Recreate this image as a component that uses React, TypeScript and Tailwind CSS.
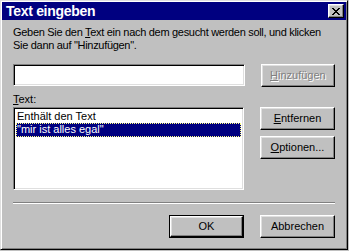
import React from 'react';

const raised =
  'border border-t-white border-l-white border-r-black border-b-black shadow-[inset_-1px_-1px_#808080,inset_1px_1px_#dfdfdf]';
const sunken =
  'border border-t-[#808080] border-l-[#808080] border-r-white border-b-white shadow-[inset_1px_1px_#000,inset_-1px_-1px_#dfdfdf]';

function Btn({ children, disabled, isDefault }: { children: React.ReactNode; disabled?: boolean; isDefault?: boolean }) {
  const inner = (
    <div
      className={`${raised} flex h-full w-full items-center justify-center bg-[#c0c0c0] ${
        disabled ? 'text-[#808080] [text-shadow:1px_1px_#fff]' : 'text-black'
      }`}
    >
      {children}
    </div>
  );
  if (isDefault) {
    return <div className="h-[23px] w-[75px] border border-black">{inner}</div>;
  }
  return <div className="h-[23px] w-[75px]">{inner}</div>;
}

export default function App() {
  return (
    <div className="h-[251px] w-[349px] bg-[#c0c0c0] font-['Liberation_Sans',Arial,sans-serif] text-[11px] leading-[13px] text-black">
      <div className="flex h-[250px] w-[348px] flex-col border border-t-[#dfdfdf] border-l-[#dfdfdf] border-r-black border-b-black shadow-[inset_1px_1px_#fff,inset_-1px_-1px_#808080] p-[1px]">
        {/* title bar */}
        <div className="flex h-[18px] items-center justify-between bg-[#000080] pl-[4px] pr-[2px]">
          <span className="text-[14px] font-bold tracking-[-0.3px] text-white">Text eingeben</span>
          <div className={`${raised} flex h-[14px] w-[16px] items-center justify-center bg-[#c0c0c0]`}>
            <svg width="8" height="7" viewBox="0 0 8 7" shapeRendering="crispEdges">
              <path d="M0 0h2v1H0zM6 0h2v1H6zM1 1h2v1H1zM5 1h2v1H5zM2 2h4v1H2zM3 3h2v1H3zM2 4h4v1H2zM1 5h2v1H1zM5 5h2v1H5zM0 6h2v1H0zM6 6h2v1H6z" fill="#000" />
            </svg>
          </div>
        </div>

        <div className="flex flex-col px-[11px] pt-[6px]">
          <p className="whitespace-nowrap tracking-[-0.3px]">
            Geben Sie den <span className="underline">T</span>ext ein nach dem gesucht werden soll, und klicken
            <br />
            Sie dann auf "Hinzufügen".
          </p>

          <div className="mt-[12px] flex gap-[16px]">
            <div className={`${sunken} h-[22px] w-[234px] bg-white`} />
            <Btn disabled>
              <span className="underline">H</span>inzufügen
            </Btn>
          </div>

          <div className="mt-[6px] h-[13px]">
            <span className="underline">T</span>ext:
          </div>

          <div className="mt-[1px] flex gap-[16px]">
            <div className={`${sunken} h-[83px] w-[234px] bg-white p-[2px]`}>
              <div className="h-[13px] px-[1px]">Enthält den Text</div>
              <div className="h-[14px] bg-[#000080] px-[1px] text-white outline-1 -outline-offset-1 outline-dotted outline-[#ffff80]">
                "mir ist alles egal"
              </div>
            </div>
            <div className="flex flex-col gap-[6px]">
              <Btn>
                <span className="underline">E</span>ntfernen
              </Btn>
              <Btn>
                <span className="underline">O</span>ptionen...
              </Btn>
            </div>
          </div>

          <div className="mt-[12px] h-[2px] border-t border-t-[#808080] border-b border-b-white" />

          <div className="mt-[11px] flex justify-end gap-[16px]">
            <Btn isDefault>OK</Btn>
            <Btn>Abbrechen</Btn>
          </div>
        </div>
      </div>
    </div>
  );
}
